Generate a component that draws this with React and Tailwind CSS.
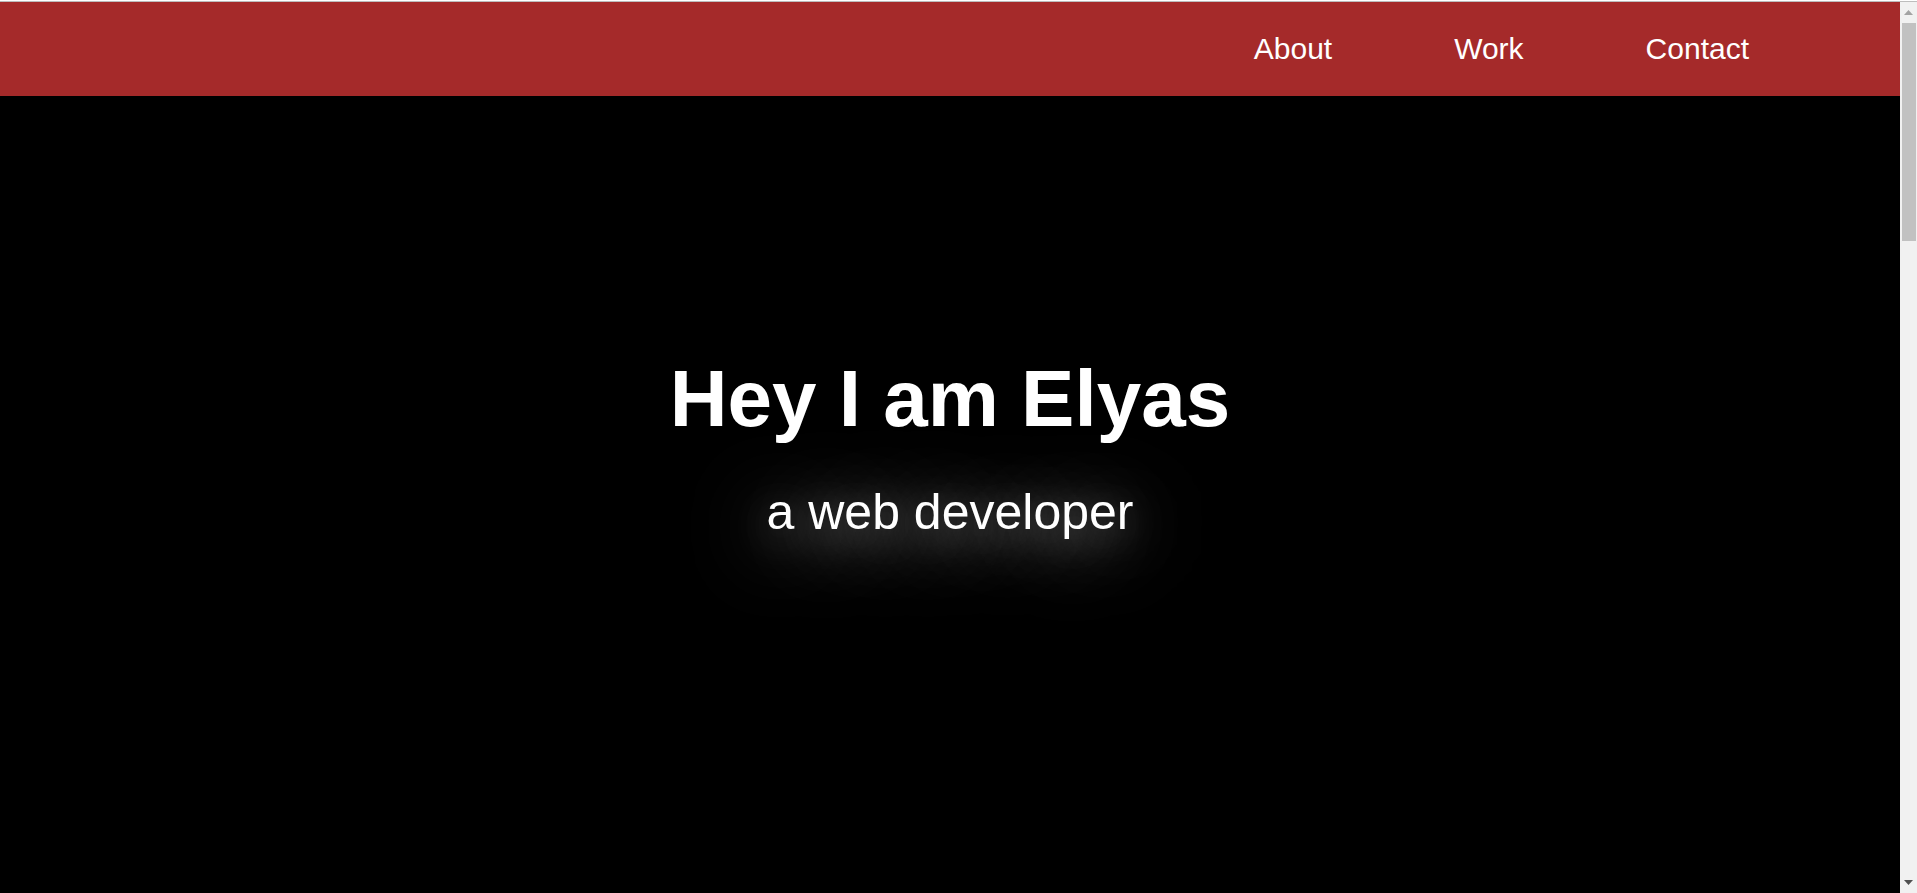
import React from 'react';

const links = ['About', 'Work', 'Contact'];

const App = () => {
  return (
    <div className="flex h-screen flex-col overflow-hidden bg-black font-['Liberation_Sans',Arial,sans-serif] text-white">
      <div className="h-px shrink-0 bg-white" />
      <div className="h-px shrink-0 bg-[#bdbdbd]" />
      <div className="flex min-h-0 flex-1">
        <main className="min-w-0 flex-1">
          <nav className="flex h-[94px] items-center justify-end gap-[122px] bg-[#a52a2a] pr-[151px]">
            {links.map((link) => (
              <a key={link} href="#" className="text-[30px] leading-none text-white">
                {link}
              </a>
            ))}
          </nav>

          <section className="flex flex-col items-center pt-[263px]">
            <h1 className="text-[80px] font-bold leading-none">Hey I am Elyas</h1>
            <p className="mt-12 text-[50px] leading-none [text-shadow:0_10px_80px_#fff,0_8px_40px_rgba(255,255,255,0.35)]">
              a web developer
            </p>
          </section>
        </main>

        {/* page scrollbar */}
        <aside className="flex w-[17px] shrink-0 flex-col items-center bg-[#f1f1f1]">
          <div className="flex h-[21px] w-full items-center justify-center">
            <svg width="9" height="5" viewBox="0 0 9 5">
              <path d="M4.5 0 L9 5 L0 5 Z" fill="#a3a3a3" />
            </svg>
          </div>
          <div className="h-[218px] w-[14px] self-end mr-px bg-[#c1c1c1]" />
          <div className="flex-1" />
          <div className="flex h-[17px] w-full items-center justify-center pb-[4px]">
            <svg width="9" height="5" viewBox="0 0 9 5">
              <path d="M0 0 L9 0 L4.5 5 Z" fill="#505050" />
            </svg>
          </div>
        </aside>
      </div>
    </div>
  );
};

export default App;
